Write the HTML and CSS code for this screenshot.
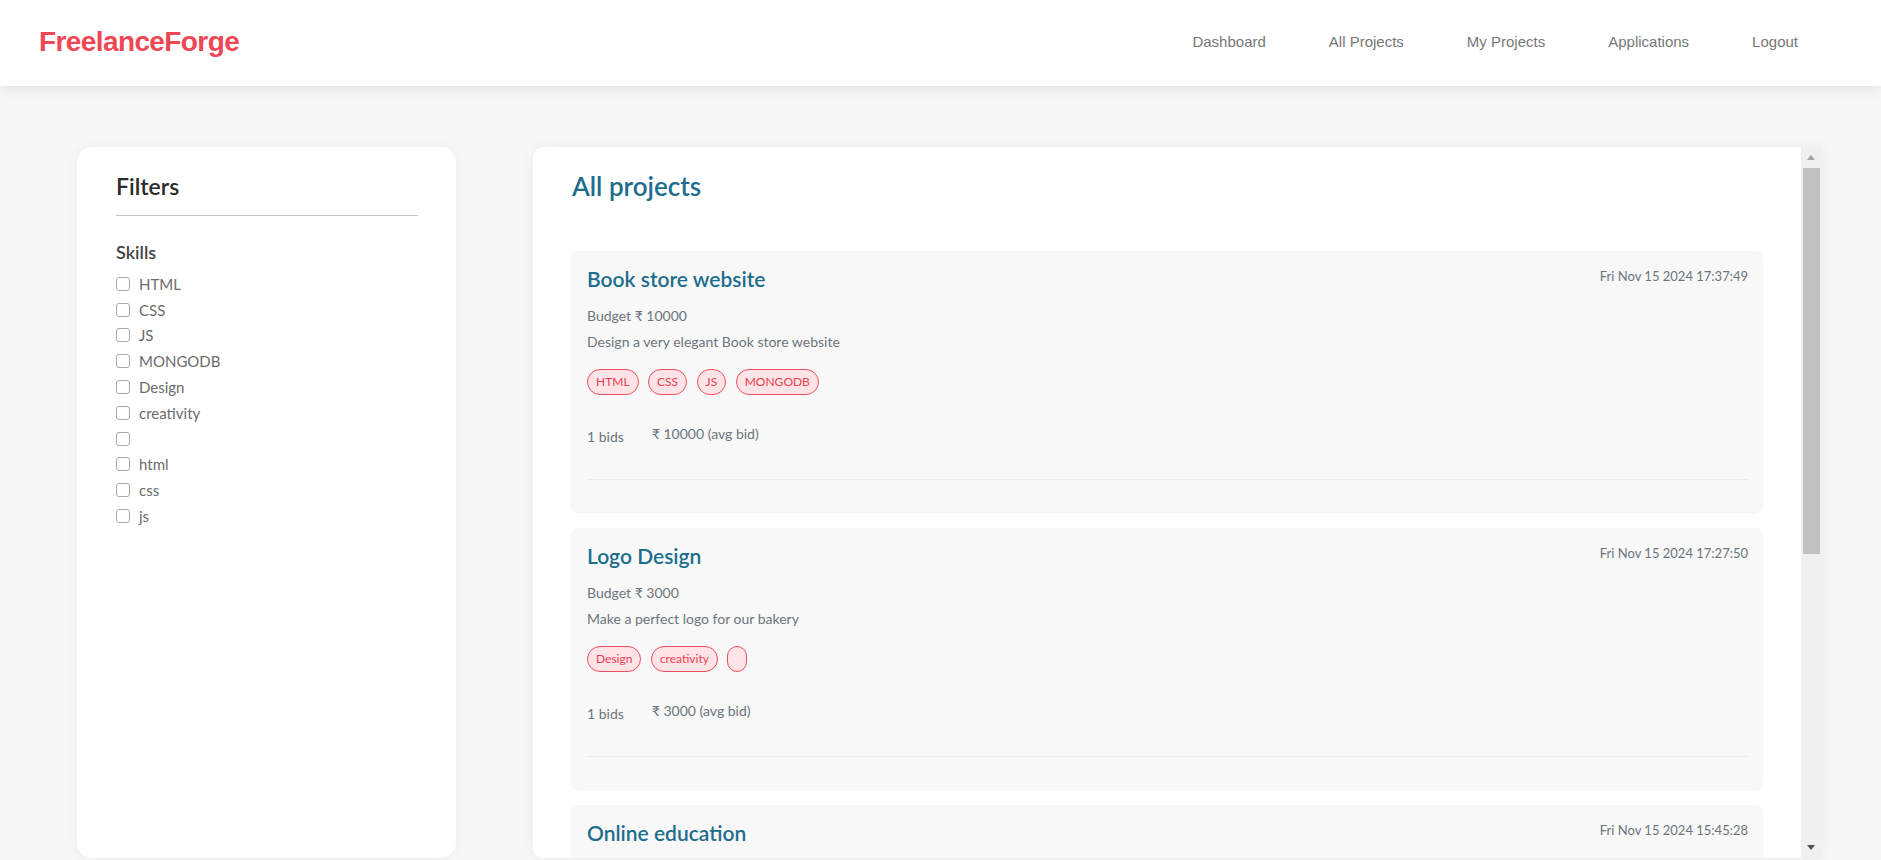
FILE: index.html
```html
<!DOCTYPE html>
<html lang="en">
<head>
<meta charset="utf-8">
<title>FreelanceForge - All projects</title>
<link rel="stylesheet" href="styles.css">
</head>
<body>
<nav class="navbar">
  <a class="brand" href="#">FreelanceForge</a>
  <div class="nav-links">
    <a class="nav-link" href="#">Dashboard</a>
    <a class="nav-link" href="#">All Projects</a>
    <a class="nav-link" href="#">My Projects</a>
    <a class="nav-link" href="#">Applications</a>
    <a class="nav-link" href="#">Logout</a>
  </div>
</nav>
<main class="content">
  <aside class="filters">
    <h2 class="filters-title">Filters</h2>
    <hr class="filters-rule">
    <h3 class="group-title">Skills</h3>
    <ul class="skill-list">
      <li class="skill"><input class="skill-box" type="checkbox"><span>HTML</span></li>
      <li class="skill"><input class="skill-box" type="checkbox"><span>CSS</span></li>
      <li class="skill"><input class="skill-box" type="checkbox"><span>JS</span></li>
      <li class="skill"><input class="skill-box" type="checkbox"><span>MONGODB</span></li>
      <li class="skill"><input class="skill-box" type="checkbox"><span>Design</span></li>
      <li class="skill"><input class="skill-box" type="checkbox"><span>creativity</span></li>
      <li class="skill"><input class="skill-box" type="checkbox"><span></span></li>
      <li class="skill"><input class="skill-box" type="checkbox"><span>html</span></li>
      <li class="skill"><input class="skill-box" type="checkbox"><span>css</span></li>
      <li class="skill"><input class="skill-box" type="checkbox"><span>js</span></li>
    </ul>
  </aside>
  <section class="projects-panel">
    <div class="panel-body">
      <h1 class="panel-title">All projects</h1>
      <div class="project-list">
        <article class="project-card">
          <div class="card-head">
            <h3 class="project-title">Book store website</h3>
            <span class="project-date">Fri Nov 15 2024 17:37:49</span>
          </div>
          <p class="project-line project-budget">Budget ₹ 10000</p>
          <p class="project-line">Design a very elegant Book store website</p>
          <div class="tags">
            <span class="tag">HTML</span><span class="tag">CSS</span><span class="tag">JS</span><span class="tag">MONGODB</span>
          </div>
          <div class="bids">
            <span class="bid-count">1 bids</span>
            <span class="bid-avg">₹ 10000 (avg bid)</span>
          </div>
          <hr class="card-rule">
        </article>
        <article class="project-card">
          <div class="card-head">
            <h3 class="project-title">Logo Design</h3>
            <span class="project-date">Fri Nov 15 2024 17:27:50</span>
          </div>
          <p class="project-line project-budget">Budget ₹ 3000</p>
          <p class="project-line">Make a perfect logo for our bakery</p>
          <div class="tags">
            <span class="tag">Design</span><span class="tag">creativity</span><span class="tag tag-empty"></span>
          </div>
          <div class="bids">
            <span class="bid-count">1 bids</span>
            <span class="bid-avg">₹ 3000 (avg bid)</span>
          </div>
          <hr class="card-rule">
        </article>
        <article class="project-card">
          <div class="card-head">
            <h3 class="project-title">Online education</h3>
            <span class="project-date">Fri Nov 15 2024 15:45:28</span>
          </div>
        </article>
      </div>
    </div>
    <div class="scrollbar" aria-hidden="true">
      <div class="scroll-btn"><span class="arrow-up"></span></div>
      <div class="scroll-track"><div class="scroll-thumb"></div></div>
      <div class="scroll-btn"><span class="arrow-down"></span></div>
    </div>
  </section>
</main>
</body>
</html>
```
FILE: styles.css
```css
* { box-sizing: border-box; }

html, body {
  margin: 0;
  height: 100%;
}

body {
  background: #f6f7f9;
  font-family: Lato, "Noto Sans", "DejaVu Sans", sans-serif;
  color: #6c757d;
  overflow: hidden;
}

/* ---------- navbar ---------- */
.navbar {
  position: relative;
  z-index: 2;
  height: 86px;
  background: #ffffff;
  box-shadow: 0 3px 12px rgba(0, 0, 0, 0.09);
  display: flex;
  align-items: center;
  justify-content: space-between;
  padding: 0 83px 0 39px;
}

.brand {
  font-family: "Liberation Sans", Arial, sans-serif;
  font-weight: 700;
  font-size: 28px;
  letter-spacing: -0.6px;
  color: #ef4754;
  text-decoration: none;
  line-height: 32px;
  padding-bottom: 2px;
}

.nav-links {
  display: flex;
  gap: 63px;
  padding-bottom: 4px;
}

.nav-link {
  font-family: "Liberation Sans", Arial, sans-serif;
  font-size: 15px;
  line-height: 17px;
  color: #777777;
  text-decoration: none;
}

/* ---------- layout ---------- */
.content {
  height: calc(100% - 86px);
  display: flex;
  gap: 77px;
  padding: 61px 59px 2px 77px;
}

/* ---------- filters ---------- */
.filters {
  width: 379px;
  flex: none;
  background: #ffffff;
  border-radius: 15px;
  box-shadow: 0 0 12px rgba(0, 0, 0, 0.05);
  padding: 25px 38px 0 39px;
}

.filters-title {
  margin: 0;
  font-size: 23px;
  line-height: 28px;
  font-weight: 600;
  color: #2b2b2b;
}

.filters-rule {
  margin: 15px 0 0;
  border: 0;
  border-top: 1px solid #c6c6c6;
}

.group-title {
  margin: 25px 0 0;
  font-size: 18px;
  line-height: 22px;
  font-weight: 600;
  color: #444444;
}

.skill-list {
  list-style: none;
  margin: 8px 0 0;
  padding: 0;
}

.skill {
  height: 25.8px;
  display: flex;
  align-items: center;
  gap: 9px;
  font-size: 15px;
  color: #6b6b6b;
}

.skill-box {
  appearance: none;
  -webkit-appearance: none;
  margin: 0;
  width: 14px;
  height: 14px;
  border: 1px solid #a9a9a9;
  border-radius: 3px;
  background: #ffffff;
  flex: none;
}

/* ---------- projects panel ---------- */
.projects-panel {
  flex: 1;
  min-width: 0;
  display: flex;
  background: #ffffff;
  border-radius: 10px 0 0 10px;
  box-shadow: 0 0 12px rgba(0, 0, 0, 0.06);
  overflow: hidden;
}

.panel-body {
  flex: 1;
  min-width: 0;
  overflow: hidden;
  padding: 24px 38px 0 38px;
}

.scrollbar {
  width: 21px;
  flex: none;
  display: flex;
  flex-direction: column;
  background: #f0f0f0;
}

.scroll-btn {
  height: 21px;
  flex: none;
  display: flex;
  align-items: center;
  justify-content: center;
  padding-right: 2px;
}

.arrow-up {
  width: 0;
  height: 0;
  border-left: 4.5px solid transparent;
  border-right: 4.5px solid transparent;
  border-bottom: 5px solid #a3a3a3;
}

.arrow-down {
  width: 0;
  height: 0;
  border-left: 4.5px solid transparent;
  border-right: 4.5px solid transparent;
  border-top: 5px solid #505050;
}

.scroll-track {
  flex: 1;
  padding: 0 2px;
}

.scroll-thumb {
  height: 386px;
  background: #c1c1c1;
}

.panel-title {
  margin: 0 0 0 1px;
  font-size: 26px;
  line-height: 31px;
  font-weight: 600;
  color: #1d6d8d;
}

.project-list {
  margin-top: 49px;
  display: flex;
  flex-direction: column;
  gap: 16px;
}

.project-card {
  background: #f8f8f8;
  border-radius: 8px;
  box-shadow: 0 1px 2px rgba(0, 0, 0, 0.06);
  padding: 16px 15px 32px 16px;
}

.card-head {
  display: flex;
  justify-content: space-between;
  align-items: flex-start;
}

.project-title {
  margin: 0;
  font-size: 21px;
  line-height: 24px;
  font-weight: 600;
  color: #1d6d8d;
}

.project-date {
  font-size: 13px;
  line-height: 18px;
  color: #6c757d;
}

.project-line {
  margin: 6px 0 0;
  font-size: 14px;
  line-height: 20px;
  color: #6c757d;
}

.project-budget {
  margin-top: 15px;
}

.tags {
  margin-top: 17px;
  display: flex;
  gap: 9.5px;
}

.tag {
  height: 26px;
  min-width: 20px;
  padding: 0 8px;
  border: 1px solid #ef4f5e;
  border-radius: 13px;
  background: #ffe3e7;
  color: #e8404f;
  font-size: 12px;
  line-height: 24px;
}

.tag-empty {
  padding: 0 9px;
}

.bids {
  margin-top: 29px;
  display: flex;
  align-items: flex-start;
  gap: 28px;
  font-size: 14px;
  line-height: 20px;
  color: #6c757d;
}

.bid-count {
  margin-top: 3px;
}

.card-rule {
  margin: 32px 0 0;
  border: 0;
  border-top: 1px solid #ececec;
}
```
